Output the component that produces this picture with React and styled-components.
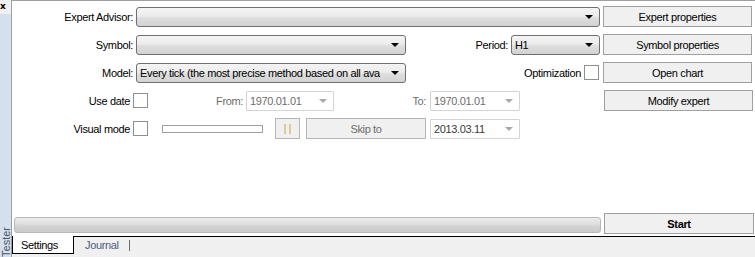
import React from "react"
import styled, { createGlobalStyle } from "styled-components"

const GlobalStyle = createGlobalStyle`
  html, body {
    margin: 0;
    padding: 0;
    background: #ffffff;
  }
  body {
    font-family: "Liberation Sans", Arial, sans-serif;
    font-size: 11px;
    letter-spacing: -0.35px;
    color: #000;
  }
`

const Root = styled.div`
  display: flex;
  width: 755px;
  height: 257px;
  overflow: hidden;
`

const SideStrip = styled.div`
  width: 11px;
  display: flex;
  flex-direction: column;
`

const CloseBar = styled.div`
  height: 14px;
  background: #f0f0f0;
  font-family: "DejaVu Sans", sans-serif;
  font-weight: bold;
  font-size: 9px;
  line-height: 12px;
  letter-spacing: 0;
`

const SideBody = styled.div`
  flex: 1;
  background: #d5e0ee;
  display: flex;
  flex-direction: column;
  justify-content: flex-end;
  align-items: center;
`

const SideTitle = styled.span`
  writing-mode: vertical-rl;
  transform: rotate(180deg);
  color: #4d5565;
  font-size: 11px;
  line-height: 10px;
  letter-spacing: 0;
`

const Main = styled.div`
  flex: 1;
  display: flex;
  flex-direction: column;
  border-left: 1px solid #a0a0a0;
`

const Panel = styled.div`
  height: 236px;
  box-sizing: border-box;
  border-top: 1px solid #a0a0a0;
  background: #fff;
  display: flex;
  flex-direction: column;
  padding-top: 5px;
`

const Form = styled.div`
  display: flex;
  flex-direction: column;
  gap: 7px;
`

const Row = styled.div`
  display: flex;
  align-items: center;
  height: 21px;
`

const Label = styled.div`
  width: ${p => p.$w}px;
  margin-left: ${p => p.$ml || 0}px;
  text-align: right;
  white-space: nowrap;
  color: ${p => (p.$disabled ? "#6d6d6d" : "#000")};
  flex-shrink: 0;
`

const Combo = styled.div`
  position: relative;
  box-sizing: border-box;
  width: ${p => p.$w}px;
  margin-left: ${p => p.$ml || 3}px;
  height: 20px;
  border: 1px solid ${p => (p.$disabled ? "#d4d4d4" : "#707070")};
  border-radius: ${p => (p.$disabled ? 1 : 3)}px;
  background: ${p =>
    p.$disabled
      ? "#ffffff"
      : "linear-gradient(#f4f4f4 0%, #ececec 45%, #dedede 55%, #d2d2d2 100%)"};
  color: ${p => (p.$disabled ? "#6d6d6d" : "#000")};
  padding: 0 18px 0 3px;
  line-height: 18px;
  flex-shrink: 0;
`

const ComboText = styled.span`
  display: block;
  overflow: hidden;
  white-space: nowrap;
  color: ${p => p.$color || "inherit"};
`

const Arrow = styled.span`
  position: absolute;
  right: 6px;
  top: 7px;
  width: 0;
  height: 0;
  border-left: 4px solid transparent;
  border-right: 4px solid transparent;
  border-top: 4px solid ${p => (p.$disabled ? "#a8a8a8" : "#000")};
`

const Button = styled.div`
  box-sizing: border-box;
  width: ${p => p.$w}px;
  height: 21px;
  margin-left: ${p => p.$ml || 0}px;
  border: 1px solid ${p => (p.$disabled ? "#b5b5b5" : "#a0a0a0")};
  background: #f0f0f0;
  color: ${p => (p.$disabled ? "#6d6d6d" : "#000")};
  font-weight: ${p => (p.$bold ? "bold" : "normal")};
  display: flex;
  align-items: center;
  justify-content: center;
  gap: 3px;
  white-space: nowrap;
  flex-shrink: 0;
`

const Spacer = styled.div`
  flex: 1;
`

const EdgeGap = styled.div`
  width: 2px;
`

const Check = styled.div`
  box-sizing: border-box;
  width: 15px;
  height: 15px;
  margin-left: ${p => p.$ml || 3}px;
  border: 1px solid #8f8f8f;
  background: #fff;
  flex-shrink: 0;
`

const Track = styled.div`
  box-sizing: border-box;
  width: 101px;
  height: 8px;
  margin-left: 14px;
  border: 1px solid #a0a0a0;
  background: #fff;
`

const PauseBar = styled.span`
  width: 2px;
  height: 10px;
  background: #dccb9e;
`

const BottomBar = styled.div`
  margin-top: auto;
  display: flex;
  align-items: center;
  height: 21px;
  margin-bottom: 2px;
`

const Progress = styled.div`
  box-sizing: border-box;
  width: 587px;
  height: 16px;
  margin-left: 2px;
  margin-top: 3px;
  border: 1px solid #b8b8b8;
  border-radius: 3px;
  background: linear-gradient(#ececec 0%, #e0e0e0 40%, #d2d2d2 60%, #cbcbcb 100%);
`

const TabBar = styled.div`
  flex: 1;
  display: flex;
  align-items: stretch;
  background: #f0f0f0;
  border-top: 1px solid #000;
`

const Tab = styled.div`
  box-sizing: border-box;
  margin-top: -1px;
  height: 18px;
  display: flex;
  align-items: center;
  color: ${p => (p.$active ? "#000" : "#4e5d7c")};
  background: ${p => (p.$active ? "#fff" : "transparent")};
  border: ${p => (p.$active ? "1px solid #000" : "none")};
  border-top: none;
  width: ${p => (p.$active ? "62px" : "auto")};
  padding: 0 ${p => (p.$active ? 0 : 10)}px 0 ${p => (p.$active ? 8 : 11)}px;
`

const TabSep = styled.div`
  width: 1px;
  height: 11px;
  background: #6d6d6d;
  margin-top: 3px;
`

export default function App() {
  return (
    <Root>
      <GlobalStyle />
      <SideStrip>
        <CloseBar>x</CloseBar>
        <SideBody>
          <SideTitle>Tester</SideTitle>
        </SideBody>
      </SideStrip>
      <Main>
        <Panel>
          <Form>
            <Row>
              <Label $w={121}>Expert Advisor:</Label>
              <Combo $w={464}>
                <Arrow />
              </Combo>
              <Button $w={149} $ml={3}>Expert properties</Button>
            </Row>
            <Row>
              <Label $w={121}>Symbol:</Label>
              <Combo $w={270}>
                <Arrow />
              </Combo>
              <Label $w={102}>Period:</Label>
              <Combo $w={89}>
                <ComboText>H1</ComboText>
                <Arrow />
              </Combo>
              <Button $w={149} $ml={3}>Symbol properties</Button>
            </Row>
            <Row>
              <Label $w={121}>Model:</Label>
              <Combo $w={270}>
                <ComboText>Every tick (the most precise method based on all ava</ComboText>
                <Arrow />
              </Combo>
              <Label $w={175}>Optimization</Label>
              <Check />
              <Button $w={149} $ml={4}>Open chart</Button>
            </Row>
            <Row>
              <Label $w={118}>Use date</Label>
              <Check />
              <Label $w={28} $ml={67} $disabled>From:</Label>
              <Combo $w={88} $disabled>
                <ComboText>1970.01.01</ComboText>
                <Arrow $disabled />
              </Combo>
              <Label $w={92} $disabled>To:</Label>
              <Combo $w={90} $ml={4} $disabled>
                <ComboText>1970.01.01</ComboText>
                <Arrow $disabled />
              </Combo>
              <Spacer />
              <Button $w={149} $ml={3}>Modify expert</Button>
              <EdgeGap />
            </Row>
            <Row>
              <Label $w={118}>Visual mode</Label>
              <Check />
              <Track />
              <Button $w={25} $ml={12} $disabled>
                <PauseBar />
                <PauseBar />
              </Button>
              <Button $w={120} $ml={6} $disabled>Skip to</Button>
              <Combo $w={90} $ml={4} $disabled>
                <ComboText $color="#3a3a3a">2013.03.11</ComboText>
                <Arrow $disabled />
              </Combo>
            </Row>
          </Form>
          <BottomBar>
            <Progress />
            <Button $w={150} $ml={3} $bold>Start</Button>
          </BottomBar>
        </Panel>
        <TabBar>
          <Tab $active>Settings</Tab>
          <Tab>Journal</Tab>
          <TabSep />
        </TabBar>
      </Main>
    </Root>
  )
}
